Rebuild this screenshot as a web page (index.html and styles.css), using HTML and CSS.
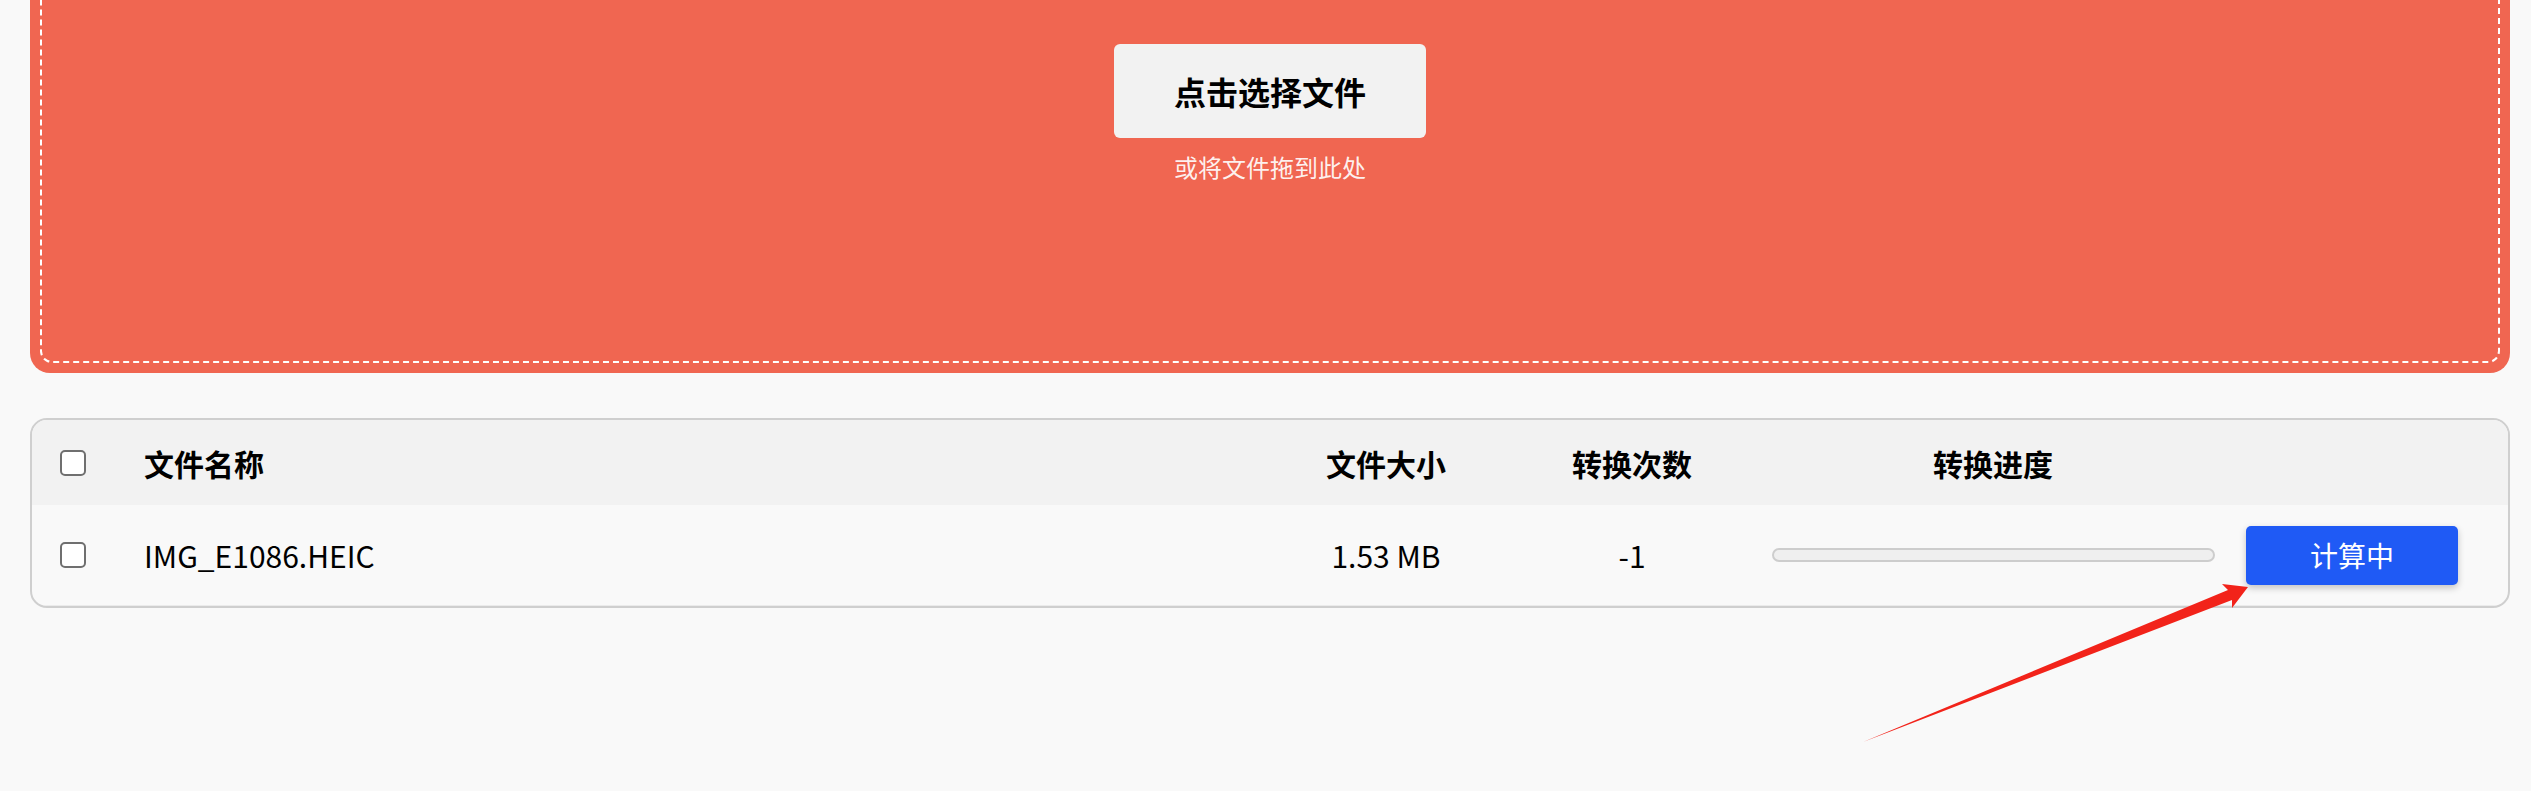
FILE: index.html
```html
<!DOCTYPE html>
<html lang="zh-CN">
<head>
<meta charset="utf-8">
<title>HEIC 转换</title>
<link rel="stylesheet" href="styles.css">
</head>
<body>
<main class="page">
  <section class="dropzone">
    <div class="dropzone-inner">
      <button class="pick-btn">点击选择文件</button>
      <p class="drop-hint">或将文件拖到此处</p>
    </div>
  </section>

  <section class="file-table">
    <div class="row head">
      <div class="cell cb"><input type="checkbox" class="check"></div>
      <div class="cell name">文件名称</div>
      <div class="cell center">文件大小</div>
      <div class="cell center">转换次数</div>
      <div class="cell center">转换进度</div>
      <div class="cell center"></div>
    </div>
    <div class="row body">
      <div class="cell cb"><input type="checkbox" class="check"></div>
      <div class="cell name">IMG_E1086.HEIC</div>
      <div class="cell center">1.53 MB</div>
      <div class="cell center">-1</div>
      <div class="cell center"><div class="progress"></div></div>
      <div class="cell center"><button class="calc-btn">计算中</button></div>
    </div>
  </section>
</main>

<svg class="annotation" width="2531" height="791" viewBox="0 0 2531 791">
  <polygon points="1863,742 2232,600 2232,608 2248,587 2222,584 2228,590" fill="#f2231a"/>
</svg>
</body>
</html>
```

FILE: styles.css
```css
html, body {
  margin: 0;
  padding: 0;
  background: #f9f9f9;
  font-family: "Noto Sans CJK SC", "Noto Sans", sans-serif;
  color: #000;
  overflow: hidden;
}

.page {
  padding: 0 21px 0 30px;
  display: flex;
  flex-direction: column;
  gap: 45px;
}

.dropzone {
  margin-top: -60px;
  height: 433px;
  box-sizing: border-box;
  padding: 10px;
  background: #f06651;
  border-radius: 20px;
  display: flex;
}

.dropzone-inner {
  flex: 1;
  border: 2px dashed #ffffff;
  border-radius: 12px;
  display: flex;
  flex-direction: column;
  align-items: center;
  padding-top: 92px;
}

.pick-btn {
  height: 94px;
  width: 312px;
  border: none;
  border-radius: 6px;
  background: #f2f2f2;
  font-family: inherit;
  font-size: 32px;
  font-weight: 700;
  color: #000;
  line-height: 32px;
  padding: 0;
}

.drop-hint {
  margin: 17px 0 0;
  font-size: 24px;
  line-height: 24px;
  color: rgba(255, 255, 255, 0.92);
}

.file-table {
  border: 2px solid #cfcfcf;
  border-radius: 17px;
  overflow: hidden;
  background: #f9f9f9;
}

.row {
  display: grid;
  grid-template-columns: 112px 1fr 244px 248px 474px 244px;
  padding-right: 34px;
  align-items: center;
  font-size: 30px;
  line-height: 30px;
}

.row.head {
  height: 85px;
  background: #f2f2f2;
  font-weight: 700;
}

.row.body {
  height: 100px;
  border-bottom: 1px solid #ebebeb;
}

.cell.cb {
  padding-left: 28px;
  display: flex;
  align-items: center;
}

.cell.center {
  display: flex;
  justify-content: center;
  align-items: center;
}

.check {
  appearance: none;
  -webkit-appearance: none;
  margin: 0;
  width: 26px;
  height: 26px;
  box-sizing: border-box;
  border: 2px solid #6f6f6f;
  border-radius: 5px;
  background: #ffffff;
}

.progress {
  width: 443px;
  height: 14px;
  box-sizing: border-box;
  border: 2px solid #cdcdcd;
  border-radius: 7px;
  background: #efefef;
}

.calc-btn {
  width: 212px;
  height: 59px;
  border: none;
  border-radius: 5px;
  background: #1f5af5;
  color: #ffffff;
  font-family: inherit;
  font-size: 28px;
  line-height: 28px;
  padding: 0;
  box-shadow: 0 3px 7px rgba(0, 0, 0, 0.22);
}

.annotation {
  position: absolute;
  left: 0;
  top: 0;
  pointer-events: none;
}
```
